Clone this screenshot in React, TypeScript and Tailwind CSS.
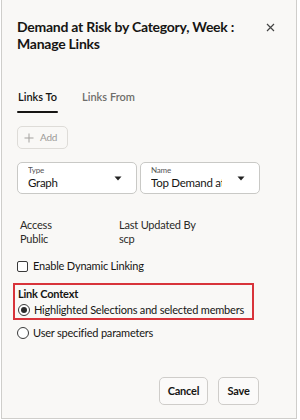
import React from 'react';

const font = { fontFamily: 'Lato, "Noto Sans", "Liberation Sans", sans-serif' };

function Caret() {
  return (
    <svg width="8" height="5" viewBox="0 0 8 5" className="shrink-0">
      <path d="M0.5 0.5h7L4 4.5z" fill="#222" />
    </svg>
  );
}

function Radio({ checked }: { checked?: boolean }) {
  return (
    <span className="flex h-[12px] w-[12px] shrink-0 items-center justify-center rounded-full border border-[#3a3a3a] bg-white">
      {checked && <span className="h-[6px] w-[6px] rounded-full bg-[#2b2b2b]" />}
    </span>
  );
}

function SelectBox({ label, value }: { label: string; value: string }) {
  return (
    <div className="flex h-[32px] w-[120px] items-center rounded-[5px] border border-[#c9c9c6] bg-white pl-[10px] pr-[14px]">
      <div className="mr-[15px] flex min-w-0 flex-1 flex-col overflow-hidden">
        <span className="text-[8px] leading-[9px] text-[#555]">{label}</span>
        <span className="whitespace-nowrap text-[11.5px] leading-[16px] tracking-[-0.25px] text-[#161513]">{value}</span>
      </div>
      <Caret />
    </div>
  );
}

export default function App() {
  return (
    <div className="flex h-[420px] w-[300px] bg-white" style={font}>
      <div className="ml-px flex h-[419px] w-[296px] flex-col border-x border-b border-[#cfcecb] bg-[#f9f8f6] pl-[15px] pr-[15px] text-[11px] tracking-[-0.2px] text-[#161513]">
        <div className="mt-[18px] flex items-start justify-between">
          <h1 className="whitespace-nowrap text-[14px] font-bold leading-[17px] tracking-[-0.25px]">
            Demand at Risk by Category, Week :<br />
            Manage Links
          </h1>
          <svg width="9" height="9" viewBox="0 0 9 9" className="mr-[6px] mt-[5px]">
            <path d="M1 1l7 7M8 1l-7 7" stroke="#444" strokeWidth="1.2" />
          </svg>
        </div>

        <div className="mt-[38px] flex gap-[24px] text-[11px] font-semibold leading-[14px] tracking-normal">
          <div className="flex flex-col">
            <span className="px-px text-[#161513]">Links To</span>
            <span className="mt-[7px] h-[2px] rounded-full bg-[#161513]" />
          </div>
          <span className="text-[#6f6e6b]">Links From</span>
        </div>

        <button className="mt-[13px] flex h-[23px] w-[51px] items-center gap-[6px] rounded-[5px] border border-[#dedcd8] pl-[6px] text-[10px] text-[#9c9a97]">
          <svg width="10" height="10" viewBox="0 0 10 10">
            <path d="M5 0.5v9M0.5 5h9" stroke="#a3a19e" strokeWidth="1" />
          </svg>
          Add
        </button>

        <div className="mt-[13px] flex gap-[3px]">
          <SelectBox label="Type" value="Graph" />
          <SelectBox label="Name" value="Top Demand at Risk" />
        </div>

        <div className="ml-[3px] mt-[24px] flex leading-[14px] text-[#2b2a28]">
          <div className="flex w-[99px] flex-col">
            <span>Access</span>
            <span>Public</span>
          </div>
          <div className="flex flex-col">
            <span>Last Updated By</span>
            <span>scp</span>
          </div>
        </div>

        <label className="mt-[13px] flex items-center gap-[5px] leading-[14px]">
          <span className="h-[11px] w-[11px] rounded-[2px] border border-[#3a3a3a] bg-white" />
          Enable Dynamic Linking
        </label>

        <div className="-ml-[4px] mt-[10px] w-[241px] border-2 border-[#d8333a] pb-[1px] pl-[3px] pt-px">
          <div className="font-bold leading-[15px]">Link Context</div>
          <div className="mt-[2px] flex items-center gap-[4px] whitespace-nowrap leading-[14px]">
            <Radio checked />
            Highlighted Selections and selected members
          </div>
        </div>

        <div className="mt-[6px] flex items-center gap-[4px] leading-[14px]">
          <Radio />
          User specified parameters
        </div>

        <div className="mr-[22px] mt-auto mb-[13px] flex justify-end gap-[10px]">
          <button className="h-[28px] w-[49px] rounded-[5px] border border-[#cfcdca] bg-[#fbfaf9] font-bold text-[#161513]">
            Cancel
          </button>
          <button className="h-[28px] w-[41px] rounded-[5px] border border-[#cfcdca] bg-[#fbfaf9] font-bold text-[#161513]">
            Save
          </button>
        </div>
      </div>
    </div>
  );
}
